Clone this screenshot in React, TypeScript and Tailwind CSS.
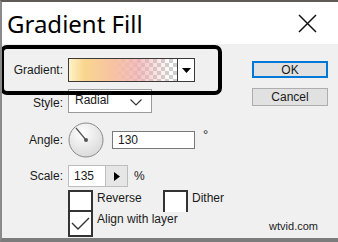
import React from "react";

const ui = "font-['Liberation_Sans',Arial,sans-serif] text-[12px] text-[#1a1a1a]";

function Dial() {
  return (
    <svg width="36" height="36" viewBox="0 0 36 36">
      <defs>
        <radialGradient id="dialFill" cx="40%" cy="30%" r="75%">
          <stop offset="0%" stopColor="#ffffff" />
          <stop offset="100%" stopColor="#d8d8d8" />
        </radialGradient>
      </defs>
      <circle cx="18" cy="18" r="17" fill="url(#dialFill)" stroke="#8a8a8a" strokeWidth="1" />
      <line x1="18" y1="18" x2="8" y2="6" stroke="#555" strokeWidth="1.2" />
      <circle cx="18" cy="18" r="2" fill="#555" />
    </svg>
  );
}

function Row({ label, className, children }: { label?: string; className: string; children: React.ReactNode }) {
  return (
    <div className={`flex items-center ${className}`}>
      <div className="w-[61px] text-right">{label}</div>
      <div className="ml-[5px] flex items-center">{children}</div>
    </div>
  );
}

export default function App() {
  return (
    <div className={`relative w-[338px] h-[242px] overflow-hidden bg-[#f0f0f0] border-l-2 border-l-[#8a8a8a] border-t-2 border-t-[#5e5a56] border-b-4 border-b-[#7c7c7c] ${ui}`}>
      {/* title bar */}
      <div className="h-[42px] bg-white flex items-center justify-between pl-[5px] pr-[21px]">
        <span className="font-['Noto_Sans',sans-serif] text-[24px] leading-none text-black pt-[2px]">Gradient Fill</span>
        <svg width="19" height="19" viewBox="0 0 19 19">
          <path d="M1 1L18 18M18 1L1 18" stroke="#111" strokeWidth="1.5" />
        </svg>
      </div>

      <div className="flex">
        <div className="w-[250px] pt-[14px]">
          <Row label="Gradient:" className="h-[24px]">
            <div className="flex w-[127px] h-[24px] border border-[#3a3a3a] bg-white">
              <div className="flex-1 bg-[repeating-conic-gradient(#cfcfcf_0%_25%,#ffffff_0%_50%)] bg-[length:8px_8px]">
                <div className="w-full h-full bg-[linear-gradient(to_right,#fdf3c8_0%,#f9d68e_14%,#f7c3a2_40%,rgba(241,172,172,0.75)_64%,rgba(240,240,240,0)_94%)]" />
              </div>
              <div className="w-[17px] border-l border-[#3a3a3a] flex items-center justify-center">
                <svg width="9" height="5" viewBox="0 0 9 5">
                  <path d="M0 0H9L4.5 5Z" fill="#000" />
                </svg>
              </div>
            </div>
          </Row>

          <Row label="Style:" className="h-[21px] mt-[10px]">
            <div className="w-[84px] h-[24px] -mt-[3px] border border-[#9a9a9a] bg-white flex items-end justify-between pl-[6px] pr-[9px] pb-[3px]">
              <span>Radial</span>
              <svg width="12" height="7" viewBox="0 0 12 7" className="mb-[3px]">
                <path d="M0.5 0.5L6 6L11.5 0.5" stroke="#333" strokeWidth="1.1" fill="none" />
              </svg>
            </div>
          </Row>

          <Row label="Angle:" className="h-[35px] mt-[9px]">
            <Dial />
            <div className="ml-[8px] w-[83px] h-[18px] border border-[#7a7a7a] bg-white flex items-center pl-[5px]">130</div>
            <span className="ml-[8px] self-start mt-[3px] text-[13px]">°</span>
          </Row>

          <Row label="Scale:" className="h-[22px] mt-[8px]">
            <div className="w-[38px] h-[22px] border border-[#bdbdbd] bg-white flex items-center pl-[5px]">135</div>
            <div className="w-[22px] h-[22px] border border-l-0 border-[#bdbdbd] bg-[#e6e6e6] flex items-center justify-center">
              <svg width="6" height="9" viewBox="0 0 6 9">
                <path d="M0 0L6 4.5L0 9Z" fill="#000" />
              </svg>
            </div>
            <span className="ml-[6px]">%</span>
          </Row>

          <div className="flex h-[22px] mt-[3px] pl-[66px]">
            <div className="w-[25px] h-[22px] border-2 border-[#333] bg-white" />
            <span className="w-[70px] pl-[4px] leading-none pt-[2px]">Reverse</span>
            <div className="w-[25px] h-[22px] border-2 border-b-0 border-[#333] bg-white" />
            <span className="pl-[4px] leading-none pt-[2px]">Dither</span>
          </div>

          <div className="flex h-[25px] pl-[66px]">
            <div className="w-[25px] h-[25px] border-2 border-t-0 border-[#333] bg-white flex items-center justify-center">
              <svg width="19" height="14" viewBox="0 0 19 14">
                <path d="M1 6L7 12L18 1" stroke="#333" strokeWidth="1.4" fill="none" />
              </svg>
            </div>
            <span className="pl-[4px] leading-none pt-[1px]">Align with layer</span>
          </div>
        </div>

        <div className="w-[76px] pt-[17px] flex flex-col">
          <button className="h-[17px] border-2 border-[#0078d7] bg-[#e1e1e1] flex items-center justify-center leading-none">OK</button>
          <button className="h-[18px] mt-[10px] border border-[#adadad] bg-[#e1e1e1] flex items-center justify-center leading-none">Cancel</button>
        </div>
      </div>

      {/* annotation highlight */}
      <div className="absolute left-[-2px] top-[43px] w-[222px] h-[50px] border-4 border-black rounded-[7px]" />

      <span className="absolute right-[20px] bottom-[4px] text-[11px] text-[#222]">wtvid.com</span>
    </div>
  );
}
